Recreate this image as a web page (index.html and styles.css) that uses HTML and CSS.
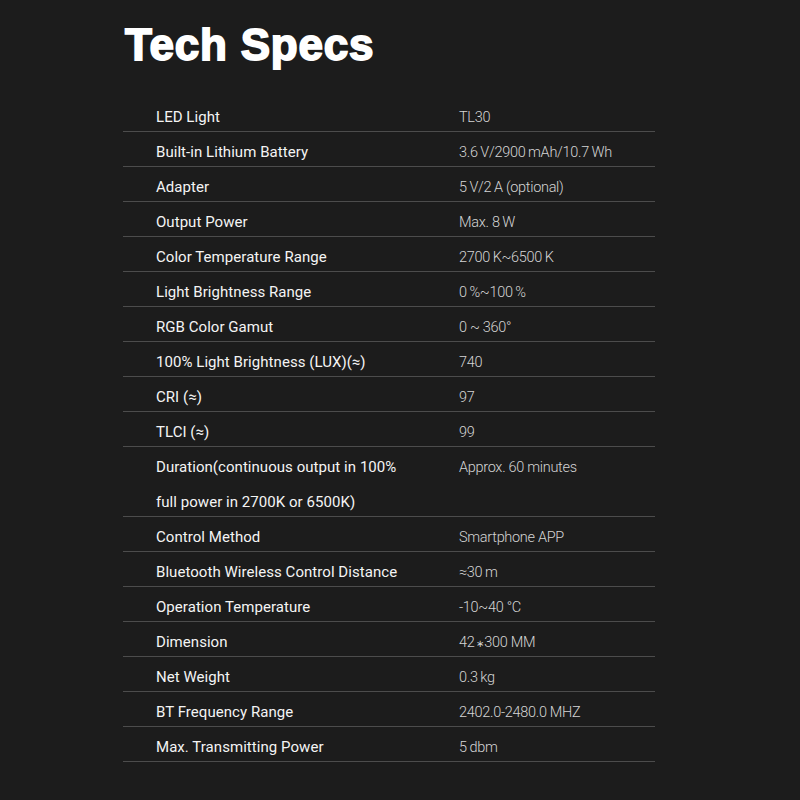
FILE: index.html
```html
<!DOCTYPE html>
<html lang="en">
<head>
    <meta charset="UTF-8">
    <title>Tech Specs</title>
    <link rel="stylesheet" href="styles.css">
</head>
<body>
<div class="specs">
    <h1 class="specs-title">Tech Specs</h1>
    <div class="spec-table">
        <div class="spec-row"><div class="spec-name">LED Light</div><div class="spec-value">TL30</div></div>
        <div class="spec-row"><div class="spec-name">Built-in Lithium Battery</div><div class="spec-value">3.6&#8201;V/2900&#8201;mAh/10.7&#8201;Wh</div></div>
        <div class="spec-row"><div class="spec-name">Adapter</div><div class="spec-value">5&#8201;V/2&#8201;A (optional)</div></div>
        <div class="spec-row"><div class="spec-name">Output Power</div><div class="spec-value">Max. 8&#8201;W</div></div>
        <div class="spec-row"><div class="spec-name">Color Temperature Range</div><div class="spec-value">2700&#8201;K~6500&#8201;K</div></div>
        <div class="spec-row"><div class="spec-name">Light Brightness Range</div><div class="spec-value">0&#8201;%~100&#8201;%</div></div>
        <div class="spec-row"><div class="spec-name">RGB Color Gamut</div><div class="spec-value">0 ~ 360°</div></div>
        <div class="spec-row"><div class="spec-name">100% Light Brightness (LUX)(≈)</div><div class="spec-value">740</div></div>
        <div class="spec-row"><div class="spec-name">CRI (≈)</div><div class="spec-value">97</div></div>
        <div class="spec-row"><div class="spec-name">TLCI (≈)</div><div class="spec-value">99</div></div>
        <div class="spec-row tall"><div class="spec-name">Duration(continuous output in 100%<br>full power in 2700K or 6500K)</div><div class="spec-value">Approx. 60 minutes</div></div>
        <div class="spec-row"><div class="spec-name">Control Method</div><div class="spec-value">Smartphone APP</div></div>
        <div class="spec-row"><div class="spec-name">Bluetooth Wireless Control Distance</div><div class="spec-value">≈30&#8201;m</div></div>
        <div class="spec-row"><div class="spec-name">Operation Temperature</div><div class="spec-value">-10~40 °C</div></div>
        <div class="spec-row"><div class="spec-name">Dimension</div><div class="spec-value">42<span class="times">∗</span>300 MM</div></div>
        <div class="spec-row"><div class="spec-name">Net Weight</div><div class="spec-value">0.3&#8201;kg</div></div>
        <div class="spec-row"><div class="spec-name">BT Frequency Range</div><div class="spec-value">2402.0-2480.0 MHZ</div></div>
        <div class="spec-row"><div class="spec-name">Max. Transmitting Power</div><div class="spec-value">5&#8201;dbm</div></div>
    </div>
</div>
</body>
</html>
```
FILE: styles.css
```css
* {
    padding: 0;
    margin: 0;
    box-sizing: border-box;
}

body {
    background: #1c1c1c;
    font-family: Roboto, "Liberation Sans", sans-serif;
}

.specs {
    width: 532px;
    margin-left: 123px;
}

.specs-title {
    margin-top: 22px;
    margin-bottom: 30px;
    padding-left: 2px;
    font-family: "Liberation Sans", Arial, sans-serif;
    font-size: 44px;
    line-height: 45px;
    font-weight: bold;
    color: #fff;
    letter-spacing: 0.8px;
    -webkit-text-stroke: 1.8px #fff;
}

.spec-row {
    display: grid;
    grid-template-columns: 303px 1fr;
    height: 35px;
    border-bottom: 1px solid #4c4c4c;
}

.spec-row.tall {
    height: 70px;
}

.spec-name,
.spec-value {
    padding-top: 3px;
    padding-left: 33px;
    line-height: 35px;
    white-space: nowrap;
}

.spec-name {
    font-size: 15px;
    font-weight: 400;
    color: #f4f4f4;
    letter-spacing: 0.05px;
}

.spec-value {
    font-size: 14.5px;
    font-weight: 300;
    color: #d4d4d4;
    letter-spacing: -0.3px;
}

.spec-value .times {
    font-size: 10px;
    padding: 0 1px;
}
```
